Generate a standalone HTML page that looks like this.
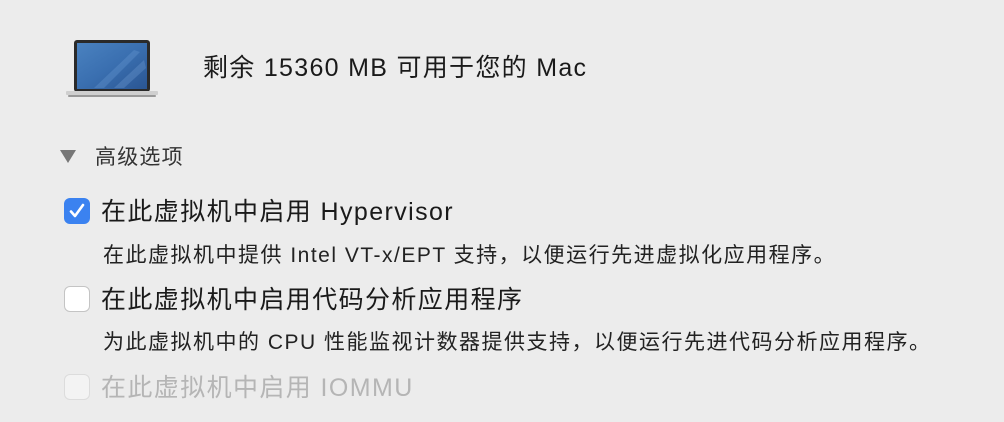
<!DOCTYPE html>
<html><head><meta charset="utf-8"><style>
body{margin:0;width:1004px;height:422px;background:#ececec;overflow:hidden;position:relative;font-family:"Liberation Sans","Noto Sans CJK SC",sans-serif;color:#222}
.t{position:absolute;white-space:nowrap;line-height:1}
.cb{position:absolute;left:64px;width:26px;height:26px;border-radius:6px;box-sizing:border-box}
.l{font-size:25px;letter-spacing:1.4px;color:#1a1a1a}
.d{font-size:21px;letter-spacing:1.5px;color:#222}
</style></head><body>
<svg style="position:absolute;left:64px;top:38px" width="96" height="62" viewBox="0 0 96 62">
<defs><linearGradient id="s" x1="0" y1="0" x2="1" y2="1"><stop offset="0" stop-color="#4a82c0"/><stop offset="0.5" stop-color="#3a6fb0"/><stop offset="1" stop-color="#2a5592"/></linearGradient></defs>
<rect x="10" y="2" width="76" height="52" rx="3" fill="#2a2a2a"/>
<rect x="13" y="5" width="70" height="46" fill="url(#s)"/>
<path d="M30 50 L70 12 L76 14 L40 50Z" fill="#6a9ad4" opacity="0.35"/>
<path d="M50 50 L80 22 L82 30 L60 50Z" fill="#7aa6dc" opacity="0.3"/>
<rect x="2" y="53" width="92" height="4" rx="1" fill="#cfcfcf"/>
<rect x="4" y="57" width="88" height="2" rx="1" fill="#999"/>
</svg>
<div class="t" style="left:203px;top:56px;font-size:25px;letter-spacing:1.3px;color:#1a1a1a">剩余 15360 MB 可用于您的 Mac</div>
<svg style="position:absolute;left:60px;top:150px" width="17" height="13"><path d="M0 0 H16 L8 13Z" fill="#777"/></svg>
<div class="t" style="left:95px;top:147px;font-size:21px;letter-spacing:1.2px;color:#333">高级选项</div>
<div class="cb" style="top:198px;background:#3b82f0"><svg width="26" height="26"><path d="M7 13.5 L11 18 L19 7" stroke="#fff" stroke-width="2.6" fill="none" stroke-linecap="round" stroke-linejoin="round"/></svg></div>
<div class="t l" style="left:101px;top:200px">在此虚拟机中启用 Hypervisor</div>
<div class="t d" style="left:103px;top:245px">在此虚拟机中提供 Intel VT-x/EPT 支持，以便运行先进虚拟化应用程序。</div>
<div class="cb" style="top:286px;background:#fff;border:1px solid #c4c4c4"></div>
<div class="t l" style="left:101px;top:288px">在此虚拟机中启用代码分析应用程序</div>
<div class="t d" style="left:103px;top:332px">为此虚拟机中的 CPU 性能监视计数器提供支持，以便运行先进代码分析应用程序。</div>
<div class="cb" style="top:374px;background:#f3f3f3;border:1px solid #dcdcdc"></div>
<div class="t l" style="left:101px;top:376px;color:#b5b5b5">在此虚拟机中启用 IOMMU</div>
</body></html>
